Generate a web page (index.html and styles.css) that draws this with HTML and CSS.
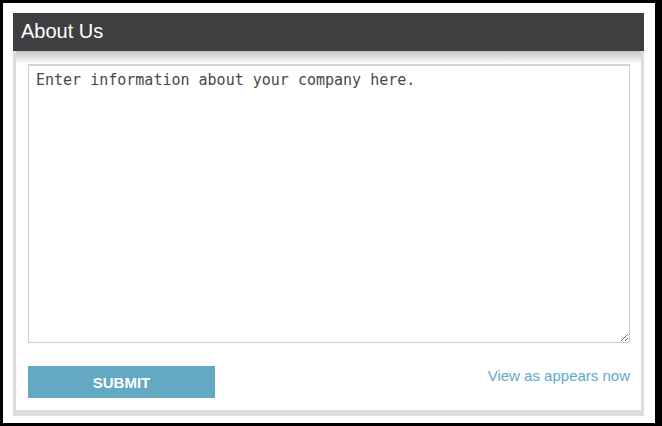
FILE: index.html
```html
<!DOCTYPE html>
<html lang="en">
<head>
<meta charset="utf-8">
<title>About Us</title>
<link rel="stylesheet" href="styles.css">
</head>
<body>
<div class="frame">
  <section class="card">
    <h1 class="card-title">About Us</h1>
    <div class="card-body">
      <textarea class="editor" spellcheck="false">Enter information about your company here.</textarea>
      <div class="actions">
        <button class="submit" type="button">SUBMIT</button>
        <a class="view-link" href="#">View as appears now</a>
      </div>
    </div>
  </section>
</div>
</body>
</html>
```
FILE: styles.css
```css
html, body {
  margin: 0;
  padding: 0;
}
body {
  background: #000;
  width: 662px;
  height: 426px;
  box-sizing: border-box;
  padding: 3px 7px 3px 3px;
  font-family: "Liberation Sans", Arial, sans-serif;
}
.frame {
  background: #fff;
  height: 420px;
  box-sizing: border-box;
  padding: 10px 11px 6px 10px;
}
.card {
  width: 631px;
}
.card-title {
  margin: 0;
  height: 38px;
  box-sizing: border-box;
  padding: 7px 8px 0 8px;
  background: #3f3e40;
  color: #fff;
  font-weight: normal;
  font-size: 20px;
  line-height: 22px;
}
.card-body {
  border: 3px solid #dddddd;
  border-top: 0;
  border-bottom-width: 6px;
  background: linear-gradient(#c6c3c6 0px, #ffffff 13px) no-repeat;
  padding: 13px 11px 12px 12px;
}
.editor {
  display: block;
  width: 602px;
  height: 279px;
  box-sizing: border-box;
  margin: 0;
  border: 1px solid #cccccc;
  border-top: 2px solid #d4d4d4;
  padding: 5px 7px 4px;
  font-family: "DejaVu Sans Mono", "Liberation Mono", monospace;
  font-size: 15px;
  line-height: 18px;
  color: #484848;
  background: #fff;
  outline: none;
}
.actions {
  margin-top: 23px;
  display: flex;
  justify-content: space-between;
  align-items: flex-start;
}
.submit {
  width: 187px;
  height: 32px;
  border: 0;
  margin: 0;
  padding: 0;
  background: #63a9c4;
  color: #fff;
  font-family: "Liberation Sans", Arial, sans-serif;
  font-weight: bold;
  font-size: 15px;
}
.view-link {
  color: #5eaacb;
  text-decoration: none;
  font-size: 15px;
  line-height: 17px;
  margin-top: 1px;
}
```
